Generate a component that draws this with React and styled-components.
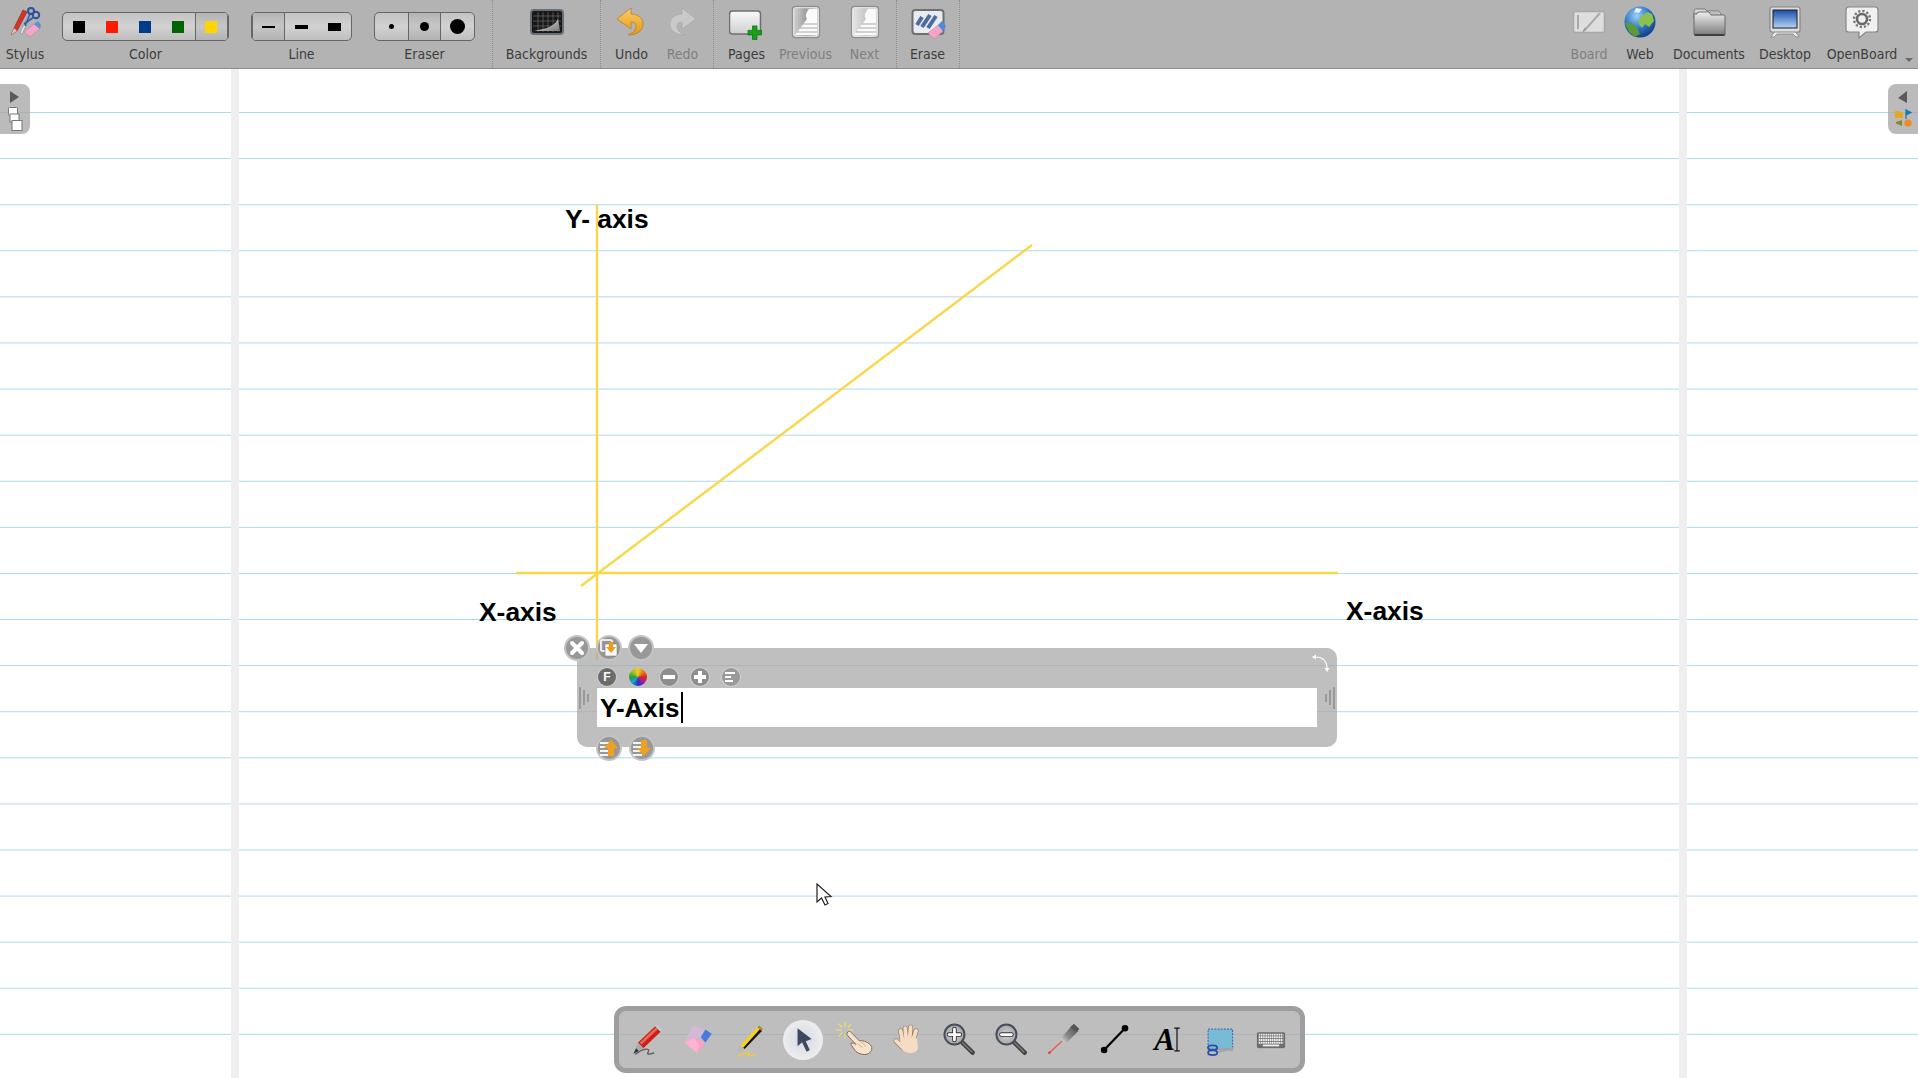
import styled, { createGlobalStyle } from "styled-components";

const GlobalStyle = createGlobalStyle`
  html, body {
    margin: 0;
    height: 100%;
    overflow: hidden;
    background: #fff;
    font-family: "DejaVu Sans Condensed", "DejaVu Sans", sans-serif;
  }
`;

const Page = styled.div`
  display: flex;
  flex-direction: column;
  width: 1918px;
  height: 1078px;
  overflow: hidden;
`;

const TopBar = styled.header`
  display: flex;
  flex: none;
  align-items: stretch;
  height: 68px;
  background: #b3b3b3;
  border-bottom: 1px solid #8c8c8c;
`;

const ToolButton = styled.div`
  display: flex;
  flex: none;
  flex-direction: column;
  align-items: center;
  width: ${(p) => p.$w}px;
  padding-top: 4px;
  svg {
    display: block;
    height: 36px;
  }
`;

const Label = styled.span`
  display: block;
  margin-top: 6px;
  font-size: 14px;
  line-height: 16px;
  white-space: nowrap;
  color: ${(p) => (p.$off ? "#808080" : "#3d3d3d")};
`;

const Palette = styled.div`
  display: flex;
  flex: none;
  flex-direction: column;
  align-items: center;
  width: ${(p) => p.$w}px;
  margin-left: ${(p) => p.$left}px;
  padding-top: 12px;
`;

const Segments = styled.div`
  display: flex;
  box-sizing: border-box;
  width: 100%;
  height: 29px;
  margin-bottom: -1px;
  border: 1px solid #666;
  border-radius: 5px;
  overflow: hidden;
  background: linear-gradient(#c3c3c3, #d2d2d2 50%, #bebebe);
`;

const Segment = styled.div`
  display: flex;
  flex: 1;
  align-items: center;
  justify-content: center;
  ${(p) =>
    p.$on &&
    `
    background: linear-gradient(#b4b4b4, #c6c6c6 50%, #b2b2b2);
    box-shadow: inset 1px 0 #666, inset -1px 0 #666;
  `}
`;

const Swatch = styled.div`
  width: 12px;
  height: 12px;
  margin-right: 1px;
  background: ${(p) => p.$color};
`;

const Stroke = styled.div`
  width: 13px;
  height: ${(p) => p.$h}px;
  background: #000;
`;

const Dot = styled.div`
  width: ${(p) => p.$d}px;
  height: ${(p) => p.$d}px;
  border-radius: 50%;
  background: #000;
`;

const Section = styled.div`
  display: flex;
  flex: none;
  box-sizing: border-box;
  margin-left: ${(p) => p.$left || 0}px;
  padding: 0 ${(p) => p.$right || 0}px 0 ${(p) => p.$pad || 0}px;
  border-left: 1px dotted #8d8d8d;
`;

const RightTools = styled.div`
  display: flex;
  margin-left: auto;
`;

const MoreArrow = styled.div`
  align-self: flex-end;
  width: 0;
  height: 0;
  margin: 0 5px 6px -2px;
  border-left: 4px solid transparent;
  border-right: 4px solid transparent;
  border-top: 4px solid #6a6a6a;
`;

const Canvas = styled.main`
  position: relative;
  flex: 1;
  background-color: #fff;
  background-image:
    linear-gradient(#efeff0, #efeff0),
    linear-gradient(#efeff0, #efeff0),
    linear-gradient(#acdaeb 1px, transparent 1px);
  background-repeat: no-repeat, no-repeat, repeat-y;
  background-size: 8px 100%, 8px 100%, 100% 46.1px;
  background-position: 231px 0, 1679px 0, 0 43px;
`;

const Drawing = styled.svg`
  position: absolute;
  top: 0;
  left: 0;
`;

const CanvasText = styled.div`
  position: absolute;
  left: ${(p) => p.$x}px;
  top: ${(p) => p.$y}px;
  font-family: "Liberation Sans", Arial, sans-serif;
  font-size: 26.4px;
  font-weight: 700;
  line-height: 30px;
  color: #000;
  white-space: nowrap;
`;

const SideTab = styled.div`
  position: absolute;
  top: 15px;
  ${(p) => (p.$right ? "right: 0;" : "left: 0;")}
  display: flex;
  flex-direction: column;
  align-items: center;
  width: 30px;
  height: 50px;
  border-radius: ${(p) => (p.$right ? "8px 0 0 8px" : "0 8px 8px 0")};
  background: rgba(168, 168, 168, 0.78);
`;

const TextPanel = styled.div`
  position: absolute;
  left: 577px;
  top: 579px;
  box-sizing: border-box;
  width: 760px;
  height: 99px;
  padding: 20px 20px 0;
  border-radius: 10px;
  background: rgba(166, 166, 166, 0.72);
`;

const FormatRow = styled.div`
  display: flex;
  gap: 13px;
  height: 18px;
  margin-bottom: 2px;
  padding-left: 1px;
`;

const SmallRound = styled.div`
  display: flex;
  align-items: center;
  justify-content: center;
  box-sizing: border-box;
  width: 18px;
  height: 18px;
  border-radius: 50%;
  background: ${(p) => p.$bg || "#8e8e8e"};
  box-shadow: 0 0 0 1px #cfcfcf;
  color: #fff;
  font-family: "Liberation Sans", sans-serif;
  font-size: 12px;
  font-weight: 700;
`;

const ColorWheel = styled(SmallRound)`
  background: conic-gradient(#f0d020, #e08020, #e02020, #a020a0, #2030c0, #20a0d0, #20a040, #a0c020, #f0d020);
  box-shadow: none;
`;

const TextInput = styled.div`
  display: flex;
  align-items: center;
  box-sizing: border-box;
  height: 39px;
  padding: 2px 0 0 3px;
  background: #fff;
  font-family: "Liberation Sans", Arial, sans-serif;
  font-size: 26px;
  font-weight: 700;
  color: #000;
`;

const Caret = styled.span`
  width: 2px;
  height: 31px;
  margin: -3px 0 0 1px;
  background: #000;
`;

const Handle = styled.div`
  position: absolute;
  left: ${(p) => p.$x}px;
  top: ${(p) => p.$y}px;
  display: flex;
  align-items: center;
  justify-content: center;
  box-sizing: border-box;
  width: 26px;
  height: 26px;
  border: 2px solid #c4c4c4;
  border-radius: 50%;
  background: #989898;
`;

const Grip = styled.svg`
  position: absolute;
  top: 39px;
  ${(p) => (p.$right ? "right: 2px;" : "left: 2px;")}
`;

const RotateIcon = styled.svg`
  position: absolute;
  top: 6px;
  right: 7px;
`;

const Dock = styled.nav`
  position: absolute;
  left: 614px;
  bottom: 5px;
  display: flex;
  align-items: center;
  justify-content: center;
  box-sizing: border-box;
  width: 691px;
  height: 67px;
  padding-right: 2px;
  border: 5px solid rgba(150, 150, 150, 0.8);
  border-radius: 12px;
  background: rgba(168, 168, 168, 0.75);
`;

const DockButton = styled.div`
  display: flex;
  flex: none;
  align-items: center;
  justify-content: center;
  width: 52px;
`;

const DockIcon = styled.div`
  display: flex;
  align-items: center;
  justify-content: center;
  width: 40px;
  height: 40px;
  border-radius: 50%;
  background: ${(p) =>
    p.$on ? "radial-gradient(circle at 50% 50%, #d6d8de 0%, #e9eaee 60%, #f5f5f6 100%)" : "transparent"};
`;

const Cursor = styled.svg`
  position: absolute;
  left: 816px;
  top: 814px;
`;

const COLORS = ["#000000", "#ff1a00", "#003c8c", "#006400", "#ffd400"];

const TopIcon = ({ children }) => (
  <svg width="36" height="36" viewBox="0 0 36 36">
    {children}
  </svg>
);

const StylusIcon = () => (
  <TopIcon>
    <path d="M4 31 L7 24 L16 6 L20 8 L10 27 Z" fill="#d43328" stroke="#8a2018" strokeWidth=".6" />
    <path d="M4 31 L7 24 L10 27 Z" fill="#cfc6b6" />
    <path d="M13 29 L23 8 L25 9 L15 30 Z" fill="#e8e8e8" stroke="#777" strokeWidth=".5" />
    <circle cx="24" cy="7" r="3" fill="none" stroke="#2c4f9e" strokeWidth="2" />
    <circle cx="29" cy="11" r="3.2" fill="none" stroke="#2c4f9e" strokeWidth="2" />
    <path d="M23 10 L18 22 M27 13 L17 20" stroke="#3a5aa8" strokeWidth="1.6" />
    <path d="M17 28 L27 20 L33 25 L23 33 Z" fill="#f2a6c8" stroke="#b87a98" strokeWidth=".5" />
    <path d="M27 20 L31 17 L34 21 L33 25 Z" fill="#5c8fd0" />
  </TopIcon>
);

const BackgroundsIcon = () => (
  <TopIcon>
    <defs>
      <linearGradient id="bgCurl" x1="0" y1="0" x2="1" y2="1">
        <stop offset="0" stopColor="#f2f2f2" />
        <stop offset="1" stopColor="#777" />
      </linearGradient>
    </defs>
    <rect x="2" y="6" width="32" height="24" rx="3" fill="#181818" stroke="#66707a" strokeWidth="2" />
    <path d="M4 12 H32 M4 17 H32 M4 22 H32 M9 8 V28 M14 8 V28 M19 8 V28 M24 8 V28 M29 8 V28" stroke="#6c6c6c" strokeWidth=".7" />
    <path d="M5 27 L18 24 Q26 21 29 15 L31 27 Z" fill="url(#bgCurl)" />
  </TopIcon>
);

const ARROW = "M5 15 L19 4 V10 C26 10 31 14 31 20 C31 27 25 31 16 31 C21 29 24 26 24 22 C24 19 22 18 19 18 V25 Z";

const UndoIcon = () => (
  <TopIcon>
    <defs>
      <linearGradient id="undoFill" x1="0" y1="0" x2="0" y2="1">
        <stop offset="0" stopColor="#fbcf62" />
        <stop offset="1" stopColor="#e6961a" />
      </linearGradient>
    </defs>
    <path d={ARROW} transform="translate(-2 0)" fill="url(#undoFill)" stroke="#b47a1a" strokeWidth=".7" />
  </TopIcon>
);

const RedoIcon = () => (
  <TopIcon>
    <path d={ARROW} transform="matrix(-1 0 0 1 36 0)" fill="#c9c9c9" stroke="#a6a6a6" strokeWidth=".7" />
  </TopIcon>
);

const PagesIcon = () => (
  <TopIcon>
    <defs>
      <linearGradient id="pageFill" x1="0" y1="0" x2="0" y2="1">
        <stop offset="0" stopColor="#fafafa" />
        <stop offset="1" stopColor="#cfcfcf" />
      </linearGradient>
    </defs>
    <g transform="translate(-2 0)">
      <rect x="2.5" y="7" width="31" height="23" rx="3" fill="url(#pageFill)" stroke="#6f6f6f" strokeWidth="1.5" />
      <path d="M25 21 H30 V26 H35 V31 H30 V36 H25 V31 H20 V26 H25 Z" transform="translate(3 3) scale(.9)" fill="#18a018" stroke="#0c6a0c" strokeWidth=".8" />
    </g>
  </TopIcon>
);

const PageTurnIcon = ({ light, id }) => (
  <TopIcon>
    <defs>
      <linearGradient id={id} x1="0" y1="0" x2="1" y2="0">
        <stop offset="0" stopColor={light ? "#e8e8e8" : "#d6d6d6"} />
        <stop offset=".5" stopColor={light ? "#c8c8c8" : "#9e9e9e"} />
        <stop offset="1" stopColor="#d8d8d8" />
      </linearGradient>
    </defs>
    <rect x="4.5" y="2.5" width="27" height="31" rx="3" fill={`url(#${id})`} stroke="#8f8f8f" strokeWidth="1.4" />
    <rect x="5.7" y="3.7" width="24.6" height="28.6" rx="2" fill="none" stroke="#e8e8e8" strokeWidth="1" />
    <path d="M21 5 H29 V31 H7 L19 15 Q16 11 21 5 Z" fill="#fafafa" />
    <path d="M15 20 H29 M12 24 H29 M9 28 H29" stroke="#a8a8a8" strokeWidth="1.1" />
  </TopIcon>
);

const EraseIcon = () => (
  <TopIcon>
    <rect x="2.5" y="6" width="31" height="24" rx="3" fill="#e8ecf2" stroke="#6f6f6f" strokeWidth="2" />
    <path d="M7 21 L12 13 M12 23 L20 11 M18 24 L26 12" stroke="#4f6c9e" strokeWidth="4" />
    <path d="M18 29 L28 21 L33 27 L24 35 Z" fill="#f4a4c8" stroke="#c47c9c" strokeWidth=".5" />
    <path d="M28 21 L32 17 L36 22 L33 27 Z" fill="#5088d8" />
  </TopIcon>
);

const BoardIcon = () => (
  <TopIcon>
    <rect x="2.5" y="7.5" width="31" height="21" rx="2" fill="#dedede" stroke="#a8a8a8" strokeWidth="1.6" />
    <path d="M7 11 V25" stroke="#a8a8a8" strokeWidth="2" />
    <path d="M13 27 L29 9" stroke="#aaa" strokeWidth="2" />
    <path d="M12 28 L14 24" stroke="#8a8a8a" strokeWidth="1" />
  </TopIcon>
);

const WebIcon = () => (
  <TopIcon>
    <defs>
      <radialGradient id="globe" cx=".4" cy=".3" r=".8">
        <stop offset="0" stopColor="#9fd0f5" />
        <stop offset=".55" stopColor="#2a6fc0" />
        <stop offset="1" stopColor="#0d2f70" />
      </radialGradient>
    </defs>
    <circle cx="18" cy="18" r="15.5" fill="url(#globe)" />
    <path d="M17 15 L25 8 L30 10 L32 17 L27 23 L23 20 L20 24 L17 20 Z" fill="#8dc24a" />
    <path d="M3 19 L10 19 L15 24 L18 30 L13 33 L7 28 Z" fill="#5c9a38" />
    <path d="M14 4 L20 5 L17 9 L12 8 Z" fill="#dff0ff" />
  </TopIcon>
);

const DocumentsIcon = () => (
  <TopIcon>
    <defs>
      <linearGradient id="folder" x1="0" y1="0" x2="0" y2="1">
        <stop offset="0" stopColor="#efefef" />
        <stop offset="1" stopColor="#7b7b7b" />
      </linearGradient>
    </defs>
    <path d="M3 7 Q3 5 5 5 H14 L16 7 H28 L30 10 V14 H3 Z" fill="#d8d8d8" stroke="#6a6a6a" strokeWidth=".8" />
    <path d="M3 9 H28 M3 11 H30" stroke="#8a8a8a" strokeWidth=".6" />
    <path d="M3 10 L6 10 Q6 8 8 8 H18 L20 11 H33 Q34 11 34 13 V31 H4 Q3 31 3 29 Z" fill="url(#folder)" stroke="#555" strokeWidth=".8" />
    <rect x="3.5" y="30" width="30" height="2" fill="#3e3e3e" />
  </TopIcon>
);

const DesktopIcon = () => (
  <TopIcon>
    <defs>
      <linearGradient id="screen" x1="0" y1="0" x2="0" y2="1">
        <stop offset="0" stopColor="#1a4caa" />
        <stop offset="1" stopColor="#b4d4f4" />
      </linearGradient>
    </defs>
    <path d="M8 27 H28 L32 33 H29 L26 30 H10 L7 33 H4 Z" fill="#ededed" stroke="#777" strokeWidth=".7" />
    <rect x="3" y="3" width="30" height="25" rx="2" fill="#dedede" stroke="#858585" strokeWidth="1.2" />
    <rect x="6" y="6" width="24" height="18" fill="url(#screen)" stroke="#1c1c1c" strokeWidth="1" />
  </TopIcon>
);

const OpenBoardIcon = () => (
  <TopIcon>
    <path d="M5 3 H31 Q34 3 34 6 V26 Q34 28 31 28 H22 L15 34 V28 H5 Q2 28 2 26 V6 Q2 3 5 3 Z" fill="#f0f0f0" stroke="#858585" strokeWidth="1.2" />
    <circle cx="18" cy="15" r="5" fill="none" stroke="#6a6a6a" strokeWidth="2.6" />
    <circle cx="18" cy="15" r="8" fill="none" stroke="#777" strokeWidth="2.4" strokeDasharray="2.2 2" />
  </TopIcon>
);

const PanelArrow = ({ left }) => (
  <svg width="12" height="14" viewBox="0 0 12 14" style={{ marginTop: 6 }}>
    <path d={left ? "M10 1 V13 L1 8 Z" : "M1 1 L10 7 L1 13 Z"} fill="#5a5a5a" />
  </svg>
);

const PagesTabIcon = () => (
  <svg width="16" height="26" viewBox="0 0 16 26" style={{ marginTop: 2 }}>
    <rect x="1.5" y="1.5" width="9" height="8" rx="1" fill="#fff" stroke="#777" />
    <rect x="3" y="8" width="9" height="8" fill="#fff" stroke="#777" />
    <rect x="5" y="14.5" width="10" height="10" fill="#fff" stroke="#777" />
  </svg>
);

const LibraryTabIcon = () => (
  <svg width="20" height="20" viewBox="0 0 20 20" style={{ marginTop: 3 }}>
    <path d="M2 4 H6 L7 5 H10 V11 H2 Z" fill="#e6a820" />
    <path d="M13 2 V12 M13 3 L18 5.5 L13 8 Z" stroke="#1878b8" fill="#1878b8" strokeWidth="1.2" />
    <path d="M9 13 V19 L3 16.5 V15 Z" fill="#8f8a20" />
    <circle cx="15" cy="16" r="3.6" fill="#ee8a20" />
  </svg>
);

const DuplicateGlyph = () => (
  <svg width="18" height="18" viewBox="0 0 18 18">
    <rect x="1" y="1" width="11" height="11" rx="1" fill="none" stroke="#fff" strokeWidth="1.6" />
    <rect x="5" y="5" width="12" height="12" rx="1" fill="#fff" stroke="#777" strokeWidth=".6" />
    <path d="M9 3 H13 V8 H16 L11 14 L6 8 H9 Z" fill="#f09a1a" />
  </svg>
);

const LayerGlyph = ({ down }) => (
  <svg width="20" height="18" viewBox="0 0 20 18">
    <path d="M1 4 H10 M1 8 H10 M1 12 H10 M1 16 H10" stroke="#f4f4f4" strokeWidth="2" />
    <path d={down ? "M9 1 H15 V9 H19 L12 17 L5 9 H9 Z" : "M12 1 L19 9 H15 V17 H9 V9 H5 Z"} fill="#f2a020" />
  </svg>
);

const DockSvg = ({ children }) => (
  <svg width="44" height="44" viewBox="0 0 44 44">
    {children}
  </svg>
);

const PenIcon = () => (
  <DockSvg>
    <path d="M9 38 C17 31 27 30 23 36 C21 39 27 37 30 36" fill="none" stroke="#666" strokeWidth="1.6" />
    <path d="M12 25 L31 7 L37 13 L18 31 Z" fill="#c8231a" />
    <path d="M14 25 L32 8 L34 10 L16 27 Z" fill="#ee6a58" />
    <path d="M31 7 L33 5 L39 11 L37 13 Z" fill="#c7c7c7" />
    <path d="M12 25 L18 31 L7 37 Z" fill="#aaa" />
    <path d="M7 37 L10 31 L13 34 Z" fill="#333" />
  </DockSvg>
);

const EraserIcon = () => (
  <DockSvg>
    <path d="M15 6 L29 10.5 L24 19 L17 20 L6 25 Z" fill="#d4b8d8" />
    <path d="M29 10.5 L36 15 L29 25 L24 19 Z" fill="#4a7ae0" />
    <path d="M6 25 L17 20 L29 25 L20 36 Z" fill="#ffa0c4" />
    <path d="M6 25 L17 20 L22 28 L20 36 Z" fill="#ffb4d0" />
  </DockSvg>
);

const HighlighterIcon = () => (
  <DockSvg>
    <g transform="translate(-3 0)">
      <path d="M10 40 C18 36 27 33 22 38 C20 41 28 38 30 38" fill="none" stroke="#f0c840" strokeWidth="1.7" />
      <path d="M13 28 L32 8 L37 12 L18 32 Z" fill="#f5d020" />
      <path d="M16 31 L35 10 L37 12 L18 32 Z" fill="#111" />
      <path d="M32 8 L34 6 L38 10 L37 12 Z" fill="#b08a20" />
      <path d="M13 28 L18 32 L8 37 Z" fill="#b9b9b9" />
    </g>
  </DockSvg>
);

const PointerIcon = () => (
  <DockSvg>
    <path d="M16 9 L16 29 L21 24.5 L26 35 L29.5 33 L25 23.5 L31.5 21 Z" fill="#3c4860" />
  </DockSvg>
);

const CLICK_FINGER = "M14 13 C15 12 17 12 18 14 L27 23 C31 22 38 25 40 29 C42 33 38 38 33 38 C28 38 23 36 21 32 L17 26 C18 25 21 25 23 27 L13 16 Z";

const ClickHandIcon = () => (
  <DockSvg>
    <path d="M11 2 V8 M11 15 V21 M1 11 H7 M14 11 H20 M4 4 L8 8 M18 4 L14 8 M4 18 L8 14" stroke="#f5e060" strokeWidth="1.2" />
    <path d={CLICK_FINGER} fill="#f9e2cc" stroke="#7d6650" strokeWidth="1" />
    <path d="M25 26 L30 30 M29 24 L34 29" stroke="#b89c82" strokeWidth=".9" />
  </DockSvg>
);

const HandIcon = () => (
  <DockSvg>
    <g transform="translate(2 0)">
      <g strokeLinecap="round" fill="none">
        <path d="M15 22 L13 12 M19 20 L18 9 M23 20 L24 8 M27 21 L30 12 M15 30 L8 23" stroke="#8f7a66" strokeWidth="5.5" />
        <path d="M15 22 L13 12 M19 20 L18 9 M23 20 L24 8 M27 21 L30 12 M15 30 L8 23" stroke="#f6dcc2" strokeWidth="4.2" />
      </g>
      <path d="M13 20 H31 L32 30 C32 35 27 37 22 36 C17 35 14 33 12 28 Z" fill="#f6dcc2" />
    </g>
  </DockSvg>
);

const LensIcon = ({ plus }) => (
  <DockSvg>
    <defs>
      <radialGradient id={plus ? "lensIn" : "lensOut"}>
        <stop offset="0" stopColor="#d0d0d0" />
        <stop offset="1" stopColor="#a8a8a8" />
      </radialGradient>
    </defs>
    <g transform="translate(2 0)">
      <path d="M23 24 L35 36" stroke="#444" strokeWidth="5" strokeLinecap="round" />
      <path d="M24 25 L34 35" stroke="#7c7c7c" strokeWidth="1.6" strokeLinecap="round" />
      <circle cx="15" cy="16" r="11" fill={`url(#${plus ? "lensIn" : "lensOut"})`} stroke="#454e5c" strokeWidth="2.2" />
      <path d={plus ? "M15 10 V22 M9 16 H21" : "M9.5 16 H20.5"} stroke="#333" strokeWidth="5" strokeLinecap="round" />
      <path d={plus ? "M15 10 V22 M9 16 H21" : "M9.5 16 H20.5"} stroke="#fff" strokeWidth="3" strokeLinecap="round" />
    </g>
  </DockSvg>
);

const LaserIcon = () => (
  <DockSvg>
    <defs>
      <linearGradient id="laserBody" x1="0" y1="1" x2="1" y2="0">
        <stop offset="0" stopColor="#eaeaea" />
        <stop offset=".4" stopColor="#8a8a8a" />
        <stop offset="1" stopColor="#4a4a4a" />
      </linearGradient>
    </defs>
    <path d="M7 36 L21 23" stroke="#e8604c" strokeWidth="1.6" />
    <circle cx="7" cy="36" r="1.4" fill="#d84830" />
    <path d="M19 21 L32 6 L39 12 L25 26 Z" fill="url(#laserBody)" />
    <path d="M30 8 L34 4 L40 10 L37 13 Z" fill="#555" />
  </DockSvg>
);

const LineIcon = () => (
  <DockSvg>
    <path d="M10 33 L33 9" stroke="#000" strokeWidth="2.4" />
    <circle cx="10" cy="33" r="3.6" fill="#000" />
    <circle cx="33" cy="9" r="3.6" fill="#000" />
  </DockSvg>
);

const TextToolIcon = () => (
  <DockSvg>
    <text x="8" y="33" fontFamily="Liberation Serif, serif" fontSize="34" fontWeight="700" fontStyle="italic" fill="#000">
      A
    </text>
    <path d="M30 9 H36 M30 34 H36 M33 9 V34" stroke="#111" strokeWidth="1.3" fill="none" />
  </DockSvg>
);

const CaptureIcon = () => (
  <DockSvg>
    <g transform="translate(1 0)">
      <rect x="9" y="10" width="27" height="22" fill="#79bbd4" stroke="#2050b8" strokeWidth="1" strokeDasharray="2 1.5" />
      <path d="M18 31.5 L36 33 M18 35.5 L37 31" stroke="#a4a4a4" strokeWidth="2.4" />
      <ellipse cx="14" cy="30.5" rx="5" ry="2.6" fill="none" stroke="#2a4ea8" strokeWidth="2" />
      <ellipse cx="14" cy="36" rx="5" ry="2.6" fill="none" stroke="#2a4ea8" strokeWidth="2" />
    </g>
  </DockSvg>
);

const KeyboardIcon = () => (
  <DockSvg>
    <rect x="7" y="14" width="30" height="16.5" rx="1" fill="#6e6e6e" stroke="#555" strokeWidth=".7" />
    {[16, 19, 22, 25].map((y) => (
      <path key={y} d={`M8.5 ${y} H35.5`} stroke="#efefef" strokeWidth="2" strokeDasharray="1.8 .6" />
    ))}
    <path d="M13 28 H31" stroke="#efefef" strokeWidth="2" />
  </DockSvg>
);

const DOCK_TOOLS = [
  [PenIcon], [EraserIcon], [HighlighterIcon], [PointerIcon, true], [ClickHandIcon], [HandIcon],
  [() => <LensIcon plus />], [() => <LensIcon />], [LaserIcon], [LineIcon], [TextToolIcon], [CaptureIcon], [KeyboardIcon],
];

function App() {
  return (
    <Page>
      <GlobalStyle />
      <TopBar>
        <ToolButton $w={50}>
          <StylusIcon />
          <Label>Stylus</Label>
        </ToolButton>
        <Palette $w={167} $left={12}>
          <Segments>
            {COLORS.map((c) => (
              <Segment key={c} $on={c === "#ffd400"}>
                <Swatch $color={c} />
              </Segment>
            ))}
          </Segments>
          <Label>Color</Label>
        </Palette>
        <Palette $w={101} $left={22}>
          <Segments>
            {[2, 4, 8].map((h, i) => (
              <Segment key={h} $on={i === 0}>
                <Stroke $h={h} />
              </Segment>
            ))}
          </Segments>
          <Label>Line</Label>
        </Palette>
        <Palette $w={101} $left={22}>
          <Segments>
            {[5, 9, 15].map((d, i) => (
              <Segment key={d} $on={i === 1}>
                <Dot $d={d} />
              </Segment>
            ))}
          </Segments>
          <Label>Eraser</Label>
        </Palette>
        <Section $left={17}>
          <ToolButton $w={107}>
            <BackgroundsIcon />
            <Label>Backgrounds</Label>
          </ToolButton>
        </Section>
        <Section $pad={5} $right={5}>
          <ToolButton $w={51}>
            <UndoIcon />
            <Label>Undo</Label>
          </ToolButton>
          <ToolButton $w={51}>
            <RedoIcon />
            <Label $off>Redo</Label>
          </ToolButton>
        </Section>
        <Section $pad={3} $right={2}>
          <ToolButton $w={59}>
            <PagesIcon />
            <Label>Pages</Label>
          </ToolButton>
          <ToolButton $w={59}>
            <PageTurnIcon id="prevFill" />
            <Label $off>Previous</Label>
          </ToolButton>
          <ToolButton $w={59}>
            <PageTurnIcon id="nextFill" light />
            <Label $off>Next</Label>
          </ToolButton>
        </Section>
        <Section $right={1}>
          <ToolButton $w={61}>
            <EraseIcon />
            <Label>Erase</Label>
          </ToolButton>
        </Section>
        <Section />
        <RightTools>
          <ToolButton $w={52}>
            <BoardIcon />
            <Label $off>Board</Label>
          </ToolButton>
          <ToolButton $w={50}>
            <WebIcon />
            <Label>Web</Label>
          </ToolButton>
          <ToolButton $w={88}>
            <DocumentsIcon />
            <Label>Documents</Label>
          </ToolButton>
          <ToolButton $w={64}>
            <DesktopIcon />
            <Label>Desktop</Label>
          </ToolButton>
          <ToolButton $w={90}>
            <OpenBoardIcon />
            <Label>OpenBoard</Label>
          </ToolButton>
          <MoreArrow />
        </RightTools>
      </TopBar>

      <Canvas>
        <Drawing width="1918" height="1009" viewBox="0 69 1918 1009">
          <g stroke="#f8d848" strokeWidth="2.4" fill="none">
            <path d="M597 205 V660" />
            <path d="M516 573 H1338" />
            <path d="M581 586 L1032 245" />
          </g>
        </Drawing>
        <CanvasText $x={565} $y={135}>Y- axis</CanvasText>
        <CanvasText $x={479} $y={528}>X-axis</CanvasText>
        <CanvasText $x={1346} $y={527}>X-axis</CanvasText>

        <SideTab>
          <PanelArrow />
          <PagesTabIcon />
        </SideTab>
        <SideTab $right>
          <PanelArrow left />
          <LibraryTabIcon />
        </SideTab>

        <TextPanel>
          <Handle $x={-13} $y={-13}>
            <svg width="16" height="16" viewBox="0 0 16 16">
              <path d="M3 3 L13 13 M13 3 L3 13" stroke="#fff" strokeWidth="4" strokeLinecap="round" />
            </svg>
          </Handle>
          <Handle $x={19} $y={-13}>
            <DuplicateGlyph />
          </Handle>
          <Handle $x={51} $y={-13}>
            <svg width="16" height="12" viewBox="0 0 16 12">
              <path d="M1 2 H15 L8 11 Z" fill="#fff" />
            </svg>
          </Handle>
          <RotateIcon width="18" height="18" viewBox="0 0 18 18">
            <path d="M3 3 C10 3 15 6 15 15" fill="none" stroke="#fff" strokeWidth="1.2" />
            <path d="M0 3 L4 0.5 V5.5 Z M15 18 L12.5 14 H17.5 Z" fill="#fff" />
          </RotateIcon>
          <Grip width="12" height="22" viewBox="0 0 12 22">
            <path d="M1 0 V22 M5 3 V18 M9 7 V15" stroke="#8a8a8a" strokeWidth="1.4" />
          </Grip>
          <Grip $right width="12" height="22" viewBox="0 0 12 22">
            <path d="M11 0 V22 M7 3 V18 M3 7 V15" stroke="#8a8a8a" strokeWidth="1.4" />
          </Grip>
          <FormatRow>
            <SmallRound $bg="#6c6c6c">F</SmallRound>
            <ColorWheel />
            <SmallRound>
              <svg width="12" height="4" viewBox="0 0 12 4">
                <rect width="12" height="4" fill="#fff" />
              </svg>
            </SmallRound>
            <SmallRound>
              <svg width="12" height="12" viewBox="0 0 12 12">
                <path d="M4 0 H8 V4 H12 V8 H8 V12 H4 V8 H0 V4 H4 Z" fill="#fff" />
              </svg>
            </SmallRound>
            <SmallRound $bg="#9a9a9a">
              <svg width="12" height="10" viewBox="0 0 12 10">
                <path d="M0 1 H10 M0 5 H6 M0 9 H8" stroke="#fff" strokeWidth="2" />
              </svg>
            </SmallRound>
          </FormatRow>
          <TextInput>
            Y-Axis
            <Caret />
          </TextInput>
          <Handle $x={19} $y={87}>
            <LayerGlyph />
          </Handle>
          <Handle $x={52} $y={87}>
            <LayerGlyph down />
          </Handle>
        </TextPanel>

        <Cursor width="22" height="24" viewBox="0 0 22 24">
          <path d="M1 1 V19 L5.5 15 L9 22 L12 20.5 L9 14 L15 13.5 Z" fill="#fff" stroke="#222" strokeWidth="1.2" />
        </Cursor>

        <Dock>
          {DOCK_TOOLS.map(([Icon, on], i) => (
            <DockButton key={i}>
              <DockIcon $on={on}>
                <Icon />
              </DockIcon>
            </DockButton>
          ))}
        </Dock>
      </Canvas>
    </Page>
  );
}

export default App;
